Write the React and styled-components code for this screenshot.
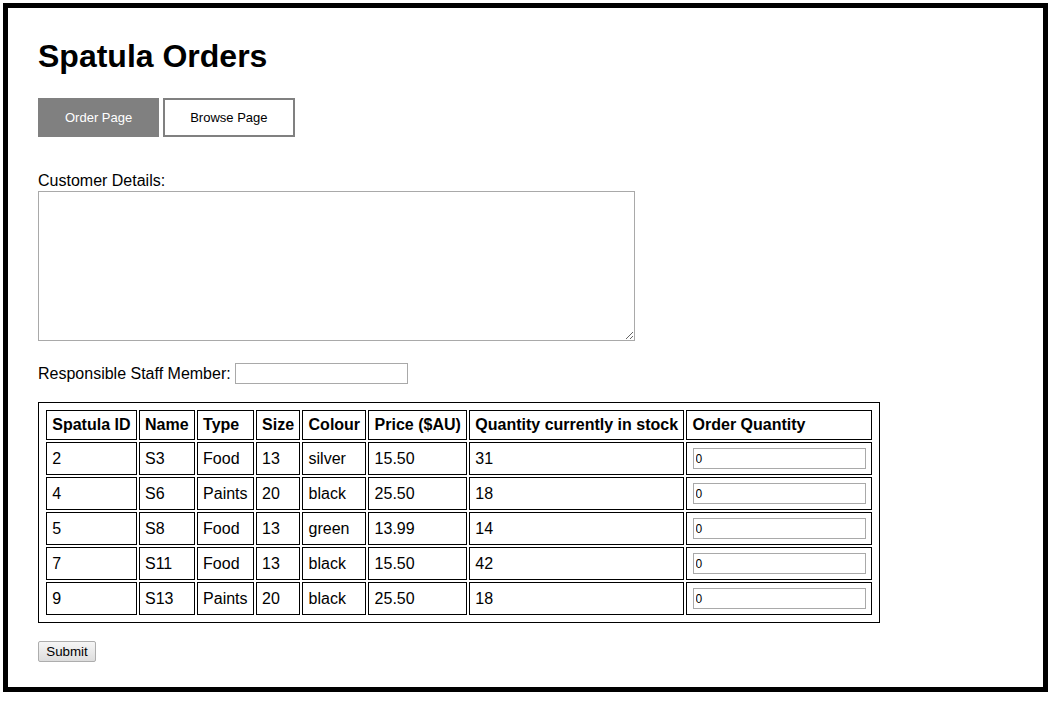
import React, { useState } from "react";
import styled, { createGlobalStyle } from "styled-components";

const GlobalStyle = createGlobalStyle`
  body {
    margin: 3px;
    background: #fff;
    font-family: "Liberation Sans", Arial, sans-serif;
    color: #000;
  }
`;

const spatulas = [
  { id: 2, name: "S3", type: "Food", size: 13, colour: "silver", price: "15.50", stock: 31 },
  { id: 4, name: "S6", type: "Paints", size: 20, colour: "black", price: "25.50", stock: 18 },
  { id: 5, name: "S8", type: "Food", size: 13, colour: "green", price: "13.99", stock: 14 },
  { id: 7, name: "S11", type: "Food", size: 13, colour: "black", price: "15.50", stock: 42 },
  { id: 9, name: "S13", type: "Paints", size: 20, colour: "black", price: "25.50", stock: 18 },
];

const headings = [
  "Spatula ID",
  "Name",
  "Type",
  "Size",
  "Colour",
  "Price ($AU)",
  "Quantity currently in stock",
  "Order Quantity",
];

const App = () => {
  const [page, setPage] = useState("order");
  const [quantities, setQuantities] = useState(spatulas.map(() => "0"));

  return (
    <>
      <GlobalStyle />
      <Frame>
        <Title>Spatula Orders</Title>
        <Tabs>
          <TabButton active={page === "order"} onClick={() => setPage("order")}>
            Order Page
          </TabButton>
          <TabButton active={page === "browse"} onClick={() => setPage("browse")}>
            Browse Page
          </TabButton>
        </Tabs>

        <OrderForm onSubmit={(e) => e.preventDefault()}>
          <Label htmlFor="details">Customer Details:</Label>
          <DetailsArea id="details" />

          <StaffRow>
            <span>Responsible Staff Member:</span>
            <TextInput type="text" />
          </StaffRow>

          <TableFrame>
            <Table>
              <thead>
                <tr>
                  {headings.map((h) => (
                    <Th key={h}>{h}</Th>
                  ))}
                </tr>
              </thead>
              <tbody>
                {spatulas.map((s, i) => (
                  <tr key={s.id}>
                    <Td>{s.id}</Td>
                    <Td>{s.name}</Td>
                    <Td>{s.type}</Td>
                    <Td>{s.size}</Td>
                    <Td>{s.colour}</Td>
                    <Td>{s.price}</Td>
                    <Td>{s.stock}</Td>
                    <Td>
                      <QtyInput
                        type="text"
                        value={quantities[i]}
                        onChange={(e) => {
                          const next = [...quantities];
                          next[i] = e.target.value;
                          setQuantities(next);
                        }}
                      />
                    </Td>
                  </tr>
                ))}
              </tbody>
            </Table>
          </TableFrame>

          <SubmitButton type="submit">Submit</SubmitButton>
        </OrderForm>
      </Frame>
    </>
  );
};

export default App;

const Frame = styled.div`
  box-sizing: border-box;
  width: 1045px;
  height: 689px;
  border: 5px solid #000;
  padding: 30px 30px 0;
`;

const Title = styled.h1`
  margin: 0;
  font-size: 32px;
  font-weight: bold;
  line-height: normal;
`;

const Tabs = styled.div`
  display: flex;
  gap: 4px;
  margin-top: 23px;
`;

const TabButton = styled.button`
  height: 39px;
  padding: 0 25px;
  border: 2px solid #808080;
  background: ${(props) => (props.active ? "#808080" : "#fff")};
  color: ${(props) => (props.active ? "#fff" : "#000")};
  font-family: "Liberation Sans", Arial, sans-serif;
  font-size: 13px;
  cursor: pointer;
`;

const OrderForm = styled.form`
  margin-top: 35px;
  font-size: 16px;
`;

const Label = styled.label`
  display: block;
  line-height: normal;
`;

const DetailsArea = styled.textarea`
  display: block;
  box-sizing: border-box;
  width: 597px;
  height: 150px;
  margin: 1px 0 0;
  border: 1px solid #a9a9a9;
  font-family: "Liberation Mono", monospace;
  font-size: 13px;
`;

const StaffRow = styled.div`
  display: flex;
  align-items: center;
  gap: 4px;
  margin-top: 22px;
`;

const TextInput = styled.input`
  box-sizing: border-box;
  width: 173px;
  height: 21px;
  margin: 0;
  padding: 1px 2px;
  border: 1px solid #a9a9a9;
  font-family: "Liberation Sans", Arial, sans-serif;
  font-size: 13px;
`;

const TableFrame = styled.div`
  width: fit-content;
  margin-top: 18px;
  padding: 5px;
  border: 1px solid #000;
`;

const Table = styled.table`
  border-collapse: separate;
  border-spacing: 2px;
  font-size: 16px;
`;

const Th = styled.th`
  padding: 5px 5.25px;
  border: 1px solid #000;
  text-align: left;
  font-weight: bold;
  line-height: normal;
  white-space: nowrap;
`;

const Td = styled.td`
  padding: 5px 5.25px;
  border: 1px solid #000;
  line-height: normal;
  vertical-align: middle;
  white-space: nowrap;
`;

const QtyInput = styled(TextInput)`
  display: block;
  font-size: 12px;
`;

const SubmitButton = styled.button`
  display: block;
  box-sizing: border-box;
  width: 58px;
  height: 21px;
  margin-top: 18px;
  padding: 0;
  border: 1px solid #adadad;
  border-radius: 2px;
  background: linear-gradient(#f6f6f6, #dddddd);
  font-family: "Liberation Sans", Arial, sans-serif;
  font-size: 13.33px;
  color: #000;
`;
